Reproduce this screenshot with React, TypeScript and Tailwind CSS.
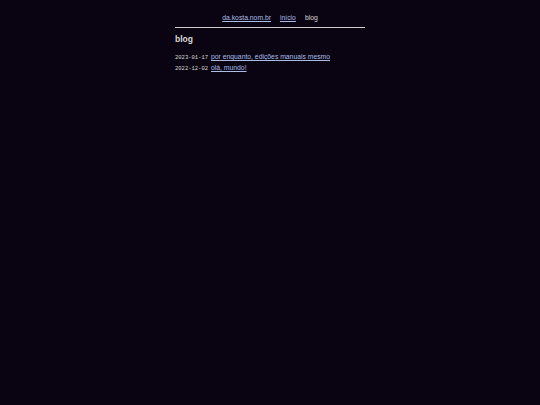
export default function App() {
  return (
    <div className="min-h-[405px] w-full bg-[#0a0412] text-[#d8d8d8]" style={{ fontFamily: '"Liberation Sans", Arial, sans-serif' }}>
      <div className="mx-auto w-[190px] pt-[13px]">
        <nav className="flex justify-center gap-[9px] text-[6.8px] leading-[9px]">
          <a href="#" className="text-[#a9bde6] underline">da.kosta.nom.br</a>
          <a href="#" className="text-[#a9bde6] underline">início</a>
          <span>blog</span>
        </nav>
        <div className="mt-[5px] h-px bg-[#cfcfcf]" />
        <h1 className="mt-[6px] text-[8.5px] font-bold leading-[10px]">blog</h1>
        <ul className="mt-[8px] flex flex-col">
          <li className="flex h-[10.5px] items-baseline gap-[3px] leading-[10px]">
            <span className="text-[5.5px]" style={{ fontFamily: '"Liberation Mono", "DejaVu Sans Mono", monospace' }}>2023-01-17</span>
            <a href="#" className="text-[6.8px] text-[#a9bde6] underline">por enquanto, edições manuais mesmo</a>
          </li>
          <li className="flex h-[10.5px] items-baseline gap-[3px] leading-[10px]">
            <span className="text-[5.5px]" style={{ fontFamily: '"Liberation Mono", "DejaVu Sans Mono", monospace' }}>2022-12-02</span>
            <a href="#" className="text-[6.8px] text-[#a9bde6] underline">olá, mundo!</a>
          </li>
        </ul>
      </div>
    </div>
  );
}
